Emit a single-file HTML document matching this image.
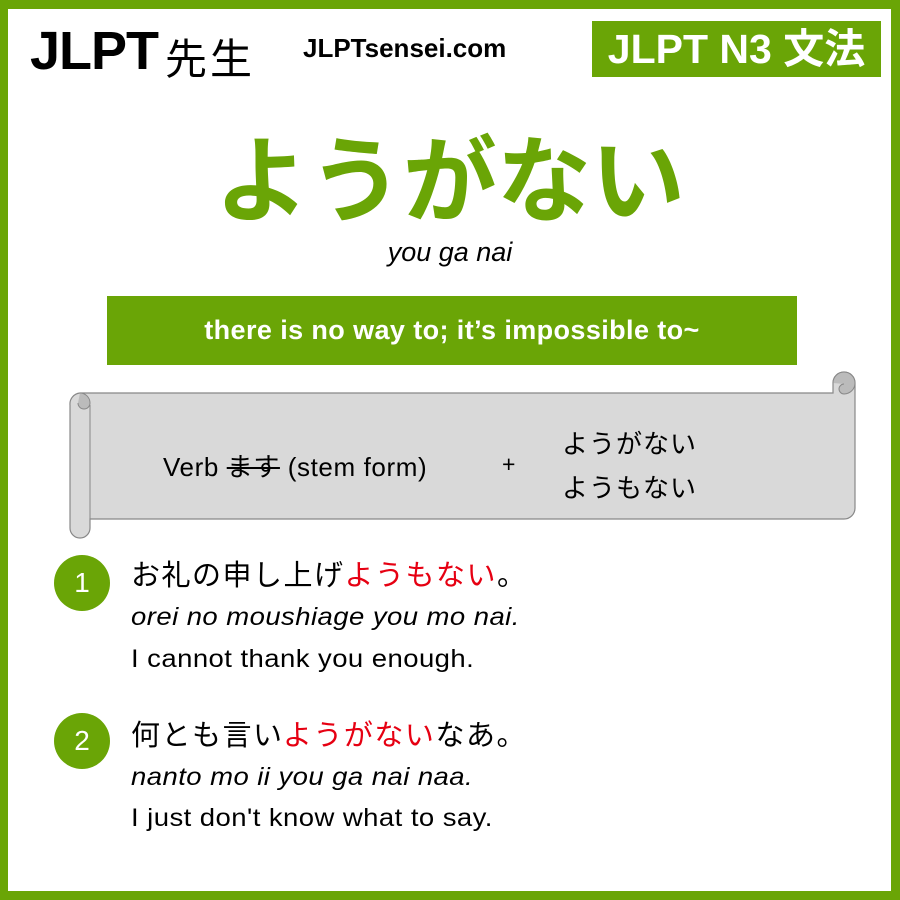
<html><head><style>
body{margin:0;width:900px;height:900px;background:#6aa506;position:relative;overflow:hidden;font-family:"Liberation Sans","Noto Sans CJK JP",sans-serif}
.in{position:absolute;left:8px;top:9px;width:883px;height:882px;background:#fff}
.a{position:absolute;white-space:nowrap}
.num{position:absolute;width:56px;height:56px;border-radius:50%;background:#6aa506;color:#fff;font-size:28px;text-align:center;line-height:56px}
.r{color:#e60012}
.l{font-size:25px;letter-spacing:0.4px;transform:scaleX(1.1);transform-origin:left}
.j{font-size:29px;letter-spacing:1.5px}
</style></head><body><div class="in"></div>
<div class="a" style="left:30px;top:20px;font-size:54px;font-weight:bold;letter-spacing:-1px">JLPT</div>
<div class="a" style="left:165px;top:26px;font-size:42px;letter-spacing:3px">先生</div>
<div class="a" style="left:303px;top:33px;font-size:26px;font-weight:bold">JLPTsensei.com</div>
<div class="a" style="left:592px;top:21px;width:289px;height:56px;background:#6aa506;color:#fff;font-size:41px;font-weight:bold;text-align:center;line-height:56px">JLPT N3 文法</div>
<div class="a" style="left:0;width:900px;text-align:center;top:106px;font-size:94px;font-weight:bold;color:#6aa506">ようがない</div>
<div class="a" style="left:0;width:900px;text-align:center;top:237px;font-size:27px;font-style:italic">you ga nai</div>
<div class="a" style="left:107px;top:296px;width:690px;height:69px;background:#6aa506;color:#fff;font-size:27px;font-weight:bold;text-align:center;line-height:69px;letter-spacing:0.4px">there is no way to; it’s impossible to~</div>
<svg class="a" style="left:0;top:0" width="900" height="560">
<path d="M80 393 H833 V383 a11 11 0 0 1 22 0 V508 a11 11 0 0 1 -11 11 H90 V528 a10 10 0 0 1 -20 0 V405 a11 11 0 0 1 10 -12Z" fill="#d9d9d9" stroke="#888" stroke-width="1.2"/>
<path d="M80 393 a10 10 0 0 1 10 10 a6 6 0 0 1 -12 0" fill="#bbb" stroke="#888"/>
<path d="M833 383 a11 11 0 0 1 22 0 a11 11 0 0 1 -11 11 a5 5 0 0 1 0 -10" fill="#bbb" stroke="#888"/>
<line x1="90" y1="405" x2="90" y2="519" stroke="#888"/>
</svg>
<div class="a" style="left:163px;top:447px;font-size:26px;letter-spacing:0.6px">Verb <span style="text-decoration:line-through">ます</span> (stem form)</div>
<div class="a" style="left:502px;top:451px;font-size:23px">+</div>
<div class="a" style="left:562px;top:422px;font-size:26px;letter-spacing:1px;line-height:44px">ようがない<br>ようもない</div>
<div class="num" style="left:54px;top:555px">1</div>
<div class="a j" style="left:131px;top:552px">お礼の申し上げ<span class="r">ようもない</span>。</div>
<div class="a l" style="left:131px;top:603px;font-style:italic">orei no moushiage you mo nai.</div>
<div class="a l" style="left:131px;top:645px">I cannot thank you enough.</div>
<div class="num" style="left:54px;top:713px">2</div>
<div class="a j" style="left:131px;top:712px">何とも言い<span class="r">ようがない</span>なあ。</div>
<div class="a l" style="left:131px;top:763px;font-style:italic">nanto mo ii you ga nai naa.</div>
<div class="a l" style="left:131px;top:804px">I just don't know what to say.</div>
</body></html>
